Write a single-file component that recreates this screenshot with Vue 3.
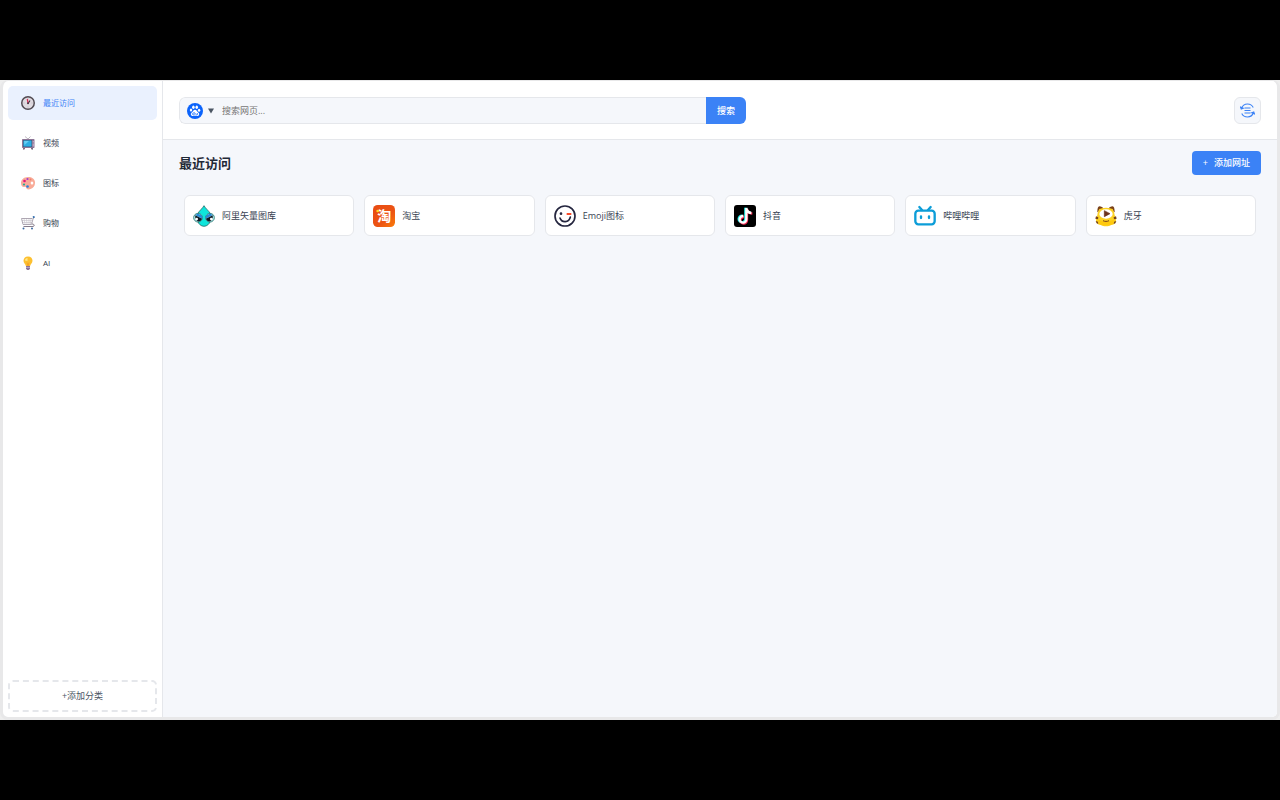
<template>
  <div class="screen">
    <div class="window">
      <!-- 左侧分类 -->
      <aside class="sidebar">
        <nav class="categories">
          <button
            v-for="c in categories"
            :key="c.id"
            type="button"
            class="category"
            :class="{ active: c.id === current }"
            @click="current = c.id"
          >
            <svg v-if="c.id === 'recent'" class="category-icon" viewBox="0 0 28 28">
              <circle cx="14" cy="14" r="12.5" fill="#dfdae0" stroke="#524b52" stroke-width="3" />
              <path d="M14 5v2M14 21v2M5 14h2M21 14h2" stroke="#b5adb6" stroke-width="1.5" />
              <path d="M14 15l4-6" stroke="#3a3240" stroke-width="2.4" />
              <path d="M14.5 15L12.5 6" stroke="#d8264f" stroke-width="2.4" />
              <circle cx="14" cy="14.5" r="1.8" fill="#3a3240" />
            </svg>
            <svg v-else-if="c.id === 'video'" class="category-icon" viewBox="0 0 28 28">
              <path d="M8 1l6 5 5-5" fill="none" stroke="#a9a2ad" stroke-width="1.5" />
              <path d="M7 23l-2 4M21 23l2 4" stroke="#5c4a63" stroke-width="3" />
              <rect x="2" y="6" width="25" height="18" rx="1.5" fill="#8d7596" />
              <rect x="4" y="8" width="18" height="14" rx="1" fill="#3c5a76" />
              <rect x="5" y="9" width="16" height="12" rx="1" fill="#2caee3" />
              <path d="M6 10h10l-9 8z" fill="#64cff3" />
              <path d="M24.5 10v3M24.5 15v6" stroke="#c8b6cf" stroke-width="2" />
            </svg>
            <svg v-else-if="c.id === 'icons'" class="category-icon" viewBox="0 0 28 28">
              <path
                d="M14 2C5 2 0 8 0 14c0 6 3 9 7 8 3-1 3 1 4 3 2 3 8 2 12-1 4-3 5-7 5-11C28 6 22 2 14 2z"
                fill="#f9ab98"
              />
              <ellipse cx="22" cy="14" rx="2.6" ry="3.2" fill="#fff" />
              <circle cx="13" cy="6" r="2.2" fill="#a43bd0" />
              <circle cx="19" cy="7" r="1.8" fill="#ef806b" />
              <circle cx="7" cy="10" r="2.6" fill="#e4147c" />
              <circle cx="6" cy="17" r="2.2" fill="#28a995" />
              <circle cx="13" cy="21" r="2.6" fill="#2680db" />
            </svg>
            <svg v-else-if="c.id === 'shop'" class="category-icon" viewBox="0 0 28 28">
              <path
                d="M6 5l2 11M11 5l1 11M16 5v11M20 5l-1 11M2 9h20M3 13h19"
                fill="none"
                stroke="#c4bfc7"
                stroke-width="1.2"
              />
              <path d="M26 3l-2 3-3 11H4L1 5h22" fill="none" stroke="#9a929f" stroke-width="1.6" />
              <path d="M22 16c5 0 6 4 2 5H5" fill="none" stroke="#867c8b" stroke-width="2" />
              <path d="M24 3l3-2" stroke="#2867aa" stroke-width="3.5" />
              <circle cx="5" cy="25" r="2" fill="#3d6ba2" />
              <circle cx="22" cy="25" r="2" fill="#3d6ba2" />
            </svg>
            <svg v-else class="category-icon" viewBox="0 0 28 28">
              <path
                d="M14 1C8 1 5 5 5 9.500c0 5 4 6 5 11h8c1-5 5-6 5-11C23 5 20 1 14 1z"
                fill="#fdc02f"
              />
              <path d="M8 9c0-3 2-5 5-5v6z" fill="#ffe78c" />
              <path d="M12 13l2 7 2-7" fill="none" stroke="#f59a23" stroke-width="1.5" />
              <path d="M10 20h8v5l-2 3h-4l-2-3z" fill="#8d7599" />
              <path d="M10 23h8" stroke="#c4b3cd" stroke-width="1.5" />
            </svg>
            <span>{{ c.name }}</span>
          </button>
        </nav>
        <button type="button" class="add-category">+添加分类</button>
      </aside>

      <div class="main">
        <!-- 顶部搜索 -->
        <header class="topbar">
          <form class="search" @submit.prevent>
            <label class="engine">
              <svg class="engine-logo" viewBox="0 0 32 32">
                <circle cx="16" cy="16" r="16" fill="#0b63fb" />
                <g fill="#fff">
                  <ellipse cx="12.800" cy="8.500" rx="2.500" ry="3.400" />
                  <ellipse cx="19.500" cy="8.500" rx="2.500" ry="3.400" />
                  <ellipse cx="8" cy="14" rx="2.400" ry="3.100" />
                  <ellipse cx="24.200" cy="14.400" rx="2.400" ry="3.100" />
                  <path
                    d="M16 13.500c-3 0-3.500 3-5.500 4.700-2.500 2-3.500 3.600-2.500 5.800 1.400 3 4.700 1.700 8 1.700s6.600 1.300 8-1.700c1-2.200 0-3.800-2.500-5.800-2-1.700-2.500-4.700-5.500-4.700z"
                  />
                </g>
                <path
                  d="M14.500 18v5.500h-2.500c-2 0-2-3.500 0-3.500h2M17.500 20v2.500c0 1 .5 1 1 1h2.500V20"
                  fill="none"
                  stroke="#0b63fb"
                  stroke-width="1.300"
                />
              </svg>
              <svg class="engine-arrow" viewBox="0 0 7 6">
                <path d="M0 0h7L3.500 6z" fill="#4b5563" />
              </svg>
              <select v-model="engine" class="engine-select" aria-label="搜索引擎">
                <option value="baidu">百度</option>
              </select>
            </label>
            <input
              v-model="keyword"
              class="search-input"
              type="text"
              placeholder="搜索网页..."
              aria-label="搜索网页"
            />
            <button type="submit" class="search-btn">搜索</button>
          </form>
          <button type="button" class="switch-btn" aria-label="切换">
            <svg class="switch-icon" viewBox="0 0 30 30" fill="none" stroke="#3b82f6" stroke-width="2.2">
              <path d="M3 11C5 5 9 2 15 2c5 0 9 2 11.500 7M27 19c-2 6-6 9-12 9-5 0-9-2-11.500-7" />
              <path d="M9 10h12M9 15h12M9 20h12" />
              <path d="M1 8l1.500 4 4-1.500zM29 22l-1.500-4-4 1.500z" fill="#3b82f6" />
            </svg>
          </button>
        </header>

        <!-- 网址列表 -->
        <main class="content">
          <div class="content-head">
            <h1 class="title">最近访问</h1>
            <button type="button" class="add-site"><span>+</span>添加网址</button>
          </div>

          <div class="sites">
            <a v-for="s in sites" :key="s.id" href="#" class="site">
              <svg v-if="s.id === 'iconfont'" class="site-icon" viewBox="0 0 66 66">
                <path
                  d="M33 2C29 10 18 18 14 26c-6 12 0 37 19 38 19-1 25-26 19-38C48 18 37 10 33 2z"
                  fill="#0ee5db"
                  stroke="#28716f"
                  stroke-width="2.500"
                />
                <circle cx="15" cy="38" r="13" fill="#b4f2f0" stroke="#28716f" stroke-width="2.500" />
                <circle cx="51" cy="38" r="13" fill="#b4f2f0" stroke="#28716f" stroke-width="2.500" />
                <path d="M12 26c6 0 13 3 16 9v6L8 31zM54 26c-6 0-13 3-16 9v6l20-10z" fill="#2689d8" />
                <path d="M7 31l20 10c-2 6-7 9-12 8-6-2-10-9-8-18zM59 31L39 41c2 6 7 9 12 8 6-2 10-9 8-18z" fill="#111b26" />
                <circle cx="11" cy="42" r="4" fill="#fff" />
                <circle cx="55" cy="42" r="4" fill="#fff" />
              </svg>
              <svg v-else-if="s.id === 'taobao'" class="site-icon" viewBox="0 0 66 66">
                <defs>
                  <linearGradient id="taobao-bg" x1="0" y1="0" x2="1" y2="1">
                    <stop offset="0" stop-color="#e84b13" />
                    <stop offset="0.600" stop-color="#ec5414" />
                    <stop offset="1" stop-color="#fb7d08" />
                  </linearGradient>
                </defs>
                <rect width="66" height="66" rx="14" fill="url(#taobao-bg)" />
                <text x="34" y="48" class="taobao-text" text-anchor="middle">淘</text>
                <circle cx="14" cy="18" r="4" fill="#ffdc21" />
              </svg>
              <svg v-else-if="s.id === 'emoji'" class="site-icon" viewBox="0 0 66 66" fill="none">
                <circle cx="33" cy="33" r="30" stroke="#25263f" stroke-width="5" />
                <circle cx="21" cy="26" r="4" fill="#25263f" />
                <path d="M38 27h14" stroke="#fa4d2b" stroke-width="6" />
                <path d="M18 39c5 15 27 15 31-3" stroke="#25263f" stroke-width="5" stroke-linecap="round" />
              </svg>
              <svg v-else-if="s.id === 'douyin'" class="site-icon" viewBox="0 0 66 66">
                <rect width="66" height="66" rx="9" fill="#000" />
                <g fill="none" stroke-width="7">
                  <path d="M34 8v34a10 10 0 1 1-9-10M34 8c1 8 6 13 15 14" stroke="#27f3ed" />
                  <path d="M39 12v34a10 10 0 1 1-9-10M39 12c1 8 6 13 16 14" stroke="#fd2b55" />
                  <path d="M37 9v34a10 10 0 1 1-9-10M37 9c1 9 6 14 15 15" stroke="#fff" />
                </g>
              </svg>
              <svg v-else-if="s.id === 'bilibili'" class="site-icon" viewBox="0 0 66 66" fill="none" stroke="#0c9dd8" stroke-width="7">
                <rect x="4" y="17" width="58" height="41" rx="9" />
                <path d="M16 6l8 9M50 6l-8 9" stroke-linecap="round" />
                <path d="M21 34v5M45 34v5" stroke-linecap="round" />
              </svg>
              <svg v-else class="site-icon" viewBox="0 0 66 66">
                <path d="M7 22C7 10 9 4 13 4c5 0 11 4 15 8zM59 22C59 10 57 4 53 4c-5 0-11 4-15 8z" fill="#794018" />
                <path d="M10 24c0-8 2-13 5-13 4 0 8 2 11 5zM56 24c0-8-2-13-5-13-4 0-8 2-11 5z" fill="#f7c32d" />
                <path d="M33 8C13 8 8 18 7 31-1 43 2 59 17 60c8 5 24 5 32 0 15-1 18-17 10-29C58 18 53 8 33 8z" fill="#fcd124" />
                <path d="M3 34l7 3-1 6-8-2zM63 34l-7 3 1 6 8-2zM2 48l7 2 1 7-5-2zM64 48l-7 2-1 7 5-2z" fill="#74411b" />
                <ellipse cx="33" cy="27" rx="20" ry="14" fill="#fff" />
                <path d="M28 17v18l17-9z" fill="#6b321e" stroke="#6b321e" stroke-width="2" stroke-linejoin="round" />
                <path d="M9 43c13 9 35 9 48 0l-2 13c-12 7-32 7-44 0z" fill="#ffc90e" />
                <path d="M24 47c5 3 13 3 18 0" fill="none" stroke="#794018" stroke-width="3" />
              </svg>
              <span class="site-name">{{ s.name }}</span>
            </a>
          </div>
        </main>
      </div>
    </div>
  </div>
</template>

<script setup>
import { ref } from "vue";

const current = ref("recent");
const engine = ref("baidu");
const keyword = ref("");

const categories = ref([
  { id: "recent", name: "最近访问" },
  { id: "video", name: "视频" },
  { id: "icons", name: "图标" },
  { id: "shop", name: "购物" },
  { id: "ai", name: "AI" },
]);

const sites = ref([
  { id: "iconfont", name: "阿里矢量图库" },
  { id: "taobao", name: "淘宝" },
  { id: "emoji", name: "Emoji图标" },
  { id: "douyin", name: "抖音" },
  { id: "bilibili", name: "哔哩哔哩" },
  { id: "huya", name: "虎牙" },
]);
</script>

<style>
body {
  margin: 0;
  background: #000;
}
</style>

<style scoped>
/* 基础 */
.screen {
  box-sizing: border-box;
  min-height: 100vh;
  padding: 10vh 0;
  display: flex;
  background: linear-gradient(#000 10vh, #eee 10vh, #eee 90vh, #000 90vh);
  color: #374151;
  font-family: "Open Sans", "Noto Sans CJK SC", sans-serif;
  font-size: 9px;
  line-height: 14px;
}
.screen * {
  box-sizing: border-box;
}
button,
input,
select {
  font: inherit;
  color: inherit;
  margin: 0;
}
button {
  cursor: pointer;
}
.window {
  flex: 1;
  display: flex;
  overflow: hidden;
  background: #fff;
  border: solid #e8e8e9;
  border-width: 1px 3px 3px;
  border-radius: 8px;
}

/* 侧边栏 */
.sidebar {
  flex: none;
  width: 160px;
  padding: 5px;
  display: flex;
  flex-direction: column;
  justify-content: space-between;
  border-right: 1px solid #e5e7eb;
}
.categories {
  display: flex;
  flex-direction: column;
  gap: 6px;
}
.category {
  height: 34px;
  padding: 0 13px;
  display: flex;
  align-items: center;
  gap: 8px;
  border: none;
  border-radius: 5px;
  background: transparent;
  font-size: 8px;
  line-height: 12px;
}
.category.active {
  background: #eaf1fe;
  color: #3b82f6;
}
.category-icon {
  width: 14px;
  height: 14px;
}
.add-category {
  height: 32px;
  border: 2px dashed #e5e7eb;
  border-radius: 5px;
  background: transparent;
  color: #4b5563;
}

/* 顶部 */
.main {
  flex: 1;
  min-width: 0;
  display: flex;
  flex-direction: column;
  background: #f5f7fb;
}
.topbar {
  padding: 16px 16px 15px;
  display: flex;
  justify-content: space-between;
  background: #fff;
  border-bottom: 1px solid #e5e7eb;
}
.search {
  width: 100%;
  max-width: 567px;
  height: 27px;
  display: flex;
  border-radius: 6px;
  overflow: hidden;
}
.engine {
  position: relative;
  padding: 0 0 0 7px;
  display: flex;
  align-items: center;
  gap: 5px;
  background: #f5f7fb;
  border: 1px solid #e5e7eb;
  border-right: none;
  border-radius: 6px 0 0 6px;
}
.engine-logo {
  width: 16px;
  height: 16px;
}
.engine-arrow {
  width: 6px;
  height: 6px;
}
.engine-select {
  position: absolute;
  inset: 0;
  width: 100%;
  opacity: 0;
}
.search-input {
  flex: 1;
  min-width: 0;
  padding: 0 8px;
  border: 1px solid #e5e7eb;
  border-width: 1px 0;
  border-radius: 0;
  background: #f5f7fb;
  outline: none;
}
.search-input::placeholder {
  color: #757575;
}
.search-btn {
  width: 40px;
  border: none;
  background: #3b82f6;
  color: #fff;
  font-weight: 500;
}
.switch-btn {
  width: 27px;
  height: 27px;
  padding: 0;
  display: flex;
  align-items: center;
  justify-content: center;
  border: 1px solid #e5e7eb;
  border-radius: 6px;
  background: #f5f7fb;
}
.switch-icon {
  width: 15px;
  height: 15px;
}

/* 内容 */
.content {
  padding: 11px 16px;
}
.content-head {
  display: flex;
  align-items: center;
  justify-content: space-between;
}
.title {
  margin: 0;
  color: #1f2937;
  font-size: 13px;
  line-height: 20px;
  font-weight: 700;
}
.add-site {
  height: 24px;
  padding: 0 11px;
  display: flex;
  align-items: center;
  gap: 6px;
  border: none;
  border-radius: 4px;
  background: #3b82f6;
  color: #fff;
  font-weight: 500;
}
.sites {
  margin: 20px 5px 0;
  display: grid;
  grid-template-columns: repeat(auto-fill, minmax(160px, 1fr));
  gap: 10px;
}
.site {
  height: 41px;
  padding: 0 8px;
  display: flex;
  align-items: center;
  gap: 7px;
  border: 1px solid #e5e7eb;
  border-radius: 6px;
  background: #fff;
  color: #374151;
  text-decoration: none;
}
.site-icon {
  flex: none;
  width: 22px;
  height: 22px;
}
.taobao-text {
  fill: #fff;
  font-family: "Noto Sans CJK SC", sans-serif;
  font-size: 42px;
  font-weight: 700;
}
</style>
